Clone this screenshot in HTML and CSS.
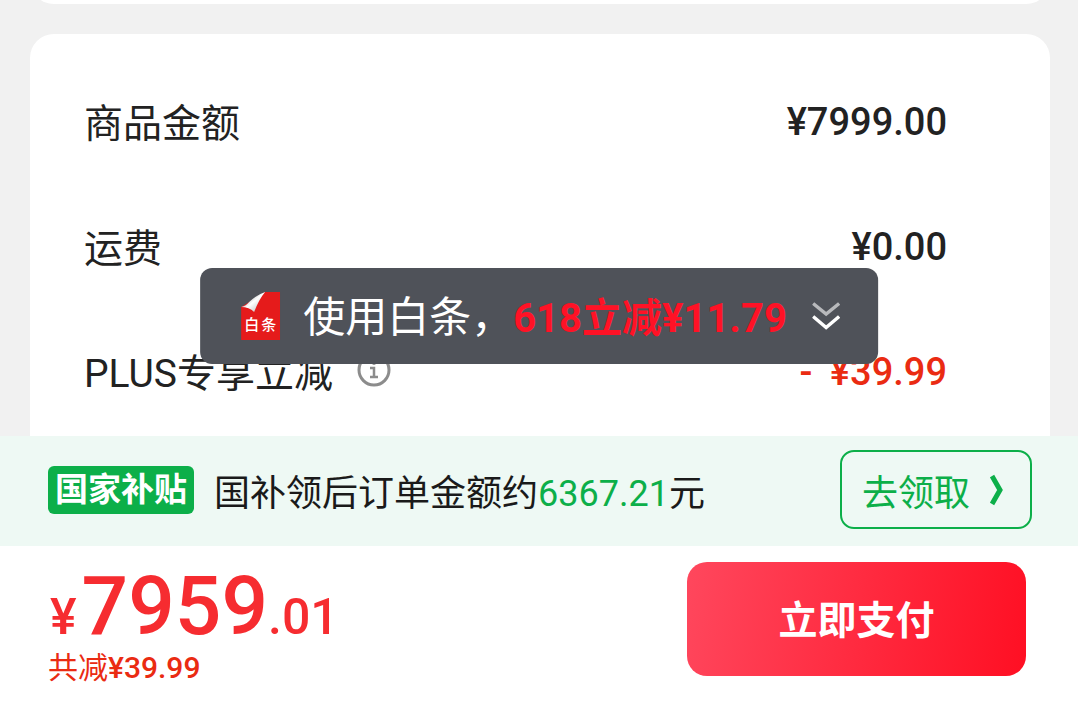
FILE: index.html
```html
<!DOCTYPE html>
<html lang="zh-CN">
<head>
    <meta charset="UTF-8">
    <meta name="viewport" content="width=device-width, initial-scale=1.0">
    <title>确认订单</title>
    <link rel="stylesheet" href="styles.css">
</head>
<body>
    <div class="page">
        <!-- Order details -->
        <main class="content">
            <section class="card card-previous"></section>
            <section class="card card-amounts">
                <div class="row">
                    <span class="label">商品金额</span>
                    <span class="amount">¥7999.00</span>
                </div>
                <div class="row">
                    <span class="label">运费</span>
                    <span class="amount">¥0.00</span>
                </div>
                <div class="row">
                    <span class="label">PLUS专享立减
                        <button type="button" class="info-button" aria-label="优惠说明">
                            <svg viewBox="0 0 34 34" fill="none" stroke="#8c8c8c">
                                <circle cx="17" cy="17" r="15" stroke-width="3"/>
                                <circle cx="17" cy="10" r="2" fill="#8c8c8c" stroke="none"/>
                                <path d="M13 15h4v9M13 24h8" stroke-width="2.5"/>
                            </svg>
                        </button>
                    </span>
                    <span class="amount discount"><span class="minus">-</span> ¥39.99</span>
                </div>
            </section>
        </main>

        <!-- Baitiao promotion -->
        <button type="button" class="toast">
            <svg class="baitiao-icon" viewBox="0 0 40 48">
                <defs>
                    <linearGradient id="fold" x1="0" y1="0" x2="1" y2="1">
                        <stop offset="0.2" stop-color="#999"/>
                        <stop offset="0.5" stop-color="#fff"/>
                        <stop offset="0.8" stop-color="#ccc"/>
                    </linearGradient>
                </defs>
                <path d="M25 0H40V48H1V15Z" fill="#e51b1b"/>
                <path d="M25 0Q19 7 14 20Q9 15 1 15Q6 14 9 10Q16 3 25 0Z" fill="url(#fold)"/>
                <text class="baitiao-text" x="4" y="38">白</text>
                <text class="baitiao-text" x="21" y="38">条</text>
            </svg>
            <span class="toast-text">使用白条，<strong>618立减¥11.79</strong></span>
            <svg class="double-chevron" viewBox="0 0 28 28" fill="none" stroke="#fff" stroke-width="3.5">
                <path d="M1 1.5L14 12L27 1.5" opacity="0.6"/>
                <path d="M1 14.5L14 25.5L27 14.5"/>
            </svg>
        </button>

        <!-- National subsidy -->
        <section class="subsidy">
            <span class="badge">国家补贴</span>
            <p class="subsidy-text">国补领后订单金额约<span class="green">6367.21</span>元</p>
            <button type="button" class="claim-button">
                <span class="claim-text">去领取</span>
                <svg class="chevron" viewBox="0 0 14 32" fill="none" stroke="#0caf49" stroke-width="5">
                    <path d="M2 2L10 16L2 30"/>
                </svg>
            </button>
        </section>

        <!-- Payment -->
        <footer class="footer">
            <div class="total">
                <div class="price"><span class="price-small currency">¥</span>7959<span class="price-small">.01</span></div>
                <div class="saved">共减<span class="saved-amount">¥39.99</span></div>
            </div>
            <button type="button" class="pay-button">立即支付</button>
        </footer>
    </div>
</body>
</html>
```

FILE: styles.css
```css
* {
    box-sizing: border-box;
}

body {
    margin: 0;
    background: #f1f1f1;
    color: #222;
    font-family: Roboto, "Noto Sans CJK SC", sans-serif;
}

button {
    border: none;
    padding: 0;
    font-family: inherit;
    cursor: pointer;
}

.page {
    position: relative;
    display: flex;
    flex-direction: column;
    height: 100vh;
    min-height: 600px;
}

.content {
    flex: 1;
    min-height: 0;
    overflow: hidden;
    padding: 0 28px 0 30px;
}

.card {
    background: #fff;
    border-radius: 24px;
}

.card-previous {
    height: 48px;
    margin-top: -44px;
    margin-bottom: 30px;
}

.card-amounts {
    padding: 26px 103px 80px 54px;
}

.row {
    display: flex;
    justify-content: space-between;
    align-items: center;
    height: 125px;
}

.label {
    display: flex;
    align-items: center;
    gap: 24px;
    padding-bottom: 5px;
    font-size: 39px;
}

.amount {
    padding-bottom: 2px;
    font-size: 38px;
    font-weight: 500;
}

.discount {
    color: #ea2b12;
}

.minus {
    margin-right: 8px;
}

.info-button {
    width: 34px;
    height: 34px;
    background: none;
}

.info-button svg {
    display: block;
}

/* Floating promotion bar */
.toast {
    position: absolute;
    bottom: 338px;
    left: 50%;
    transform: translateX(-50%);
    display: flex;
    align-items: center;
    height: 96px;
    padding: 0 38px 0 40px;
    border-radius: 12px;
    background: #4f5259;
    color: #fff;
    font-size: 42px;
    white-space: nowrap;
}

.toast-text {
    padding-bottom: 5px;
}

.toast strong {
    color: #ff1226;
    font-size: 40px;
    font-weight: 700;
}

.baitiao-icon {
    width: 40px;
    height: 48px;
    margin-right: 23px;
}

.baitiao-text {
    fill: #fff;
    font-size: 15px;
    font-weight: 500;
}

.double-chevron {
    width: 28px;
    height: 28px;
    margin-left: 25px;
}

.subsidy {
    display: flex;
    align-items: center;
    height: 110px;
    padding: 0 46px 3px 48px;
    background: #eef9f4;
    color: #1a1a1a;
}

.badge {
    padding: 0 7px;
    border-radius: 6px;
    background: #0caf49;
    color: #fff;
    font-size: 33px;
    font-weight: 700;
    line-height: 48px;
}

.subsidy-text {
    margin: 0 auto 0 20px;
    font-size: 36px;
}

.green {
    color: #0caf49;
}

.claim-button {
    display: flex;
    align-items: center;
    gap: 20px;
    height: 79px;
    padding: 0 26px 0 20px;
    border: 2px solid #0caf49;
    border-radius: 14px;
    background: none;
    color: #0caf49;
    font-size: 36px;
}

.chevron {
    width: 14px;
    height: 32px;
}

.footer {
    display: flex;
    justify-content: space-between;
    align-items: flex-start;
    height: 156px;
    padding: 16px 52px 0 48px;
    background: #fff;
}

.price {
    padding-left: 2px;
    color: #f62c30;
    font-size: 82px;
    font-weight: 500;
    line-height: 88px;
}

.price-small {
    font-size: 50px;
    line-height: 1;
}

.currency {
    margin-right: 5px;
}

.saved {
    color: #ea2b12;
    font-size: 30px;
    line-height: 36px;
}

.saved-amount {
    font-weight: 500;
}

.pay-button {
    width: 339px;
    height: 114px;
    padding-bottom: 5px;
    border-radius: 20px;
    background: linear-gradient(100deg, #ff475d, #ff0f23);
    color: #fff;
    font-size: 39px;
    font-weight: 700;
}
```
